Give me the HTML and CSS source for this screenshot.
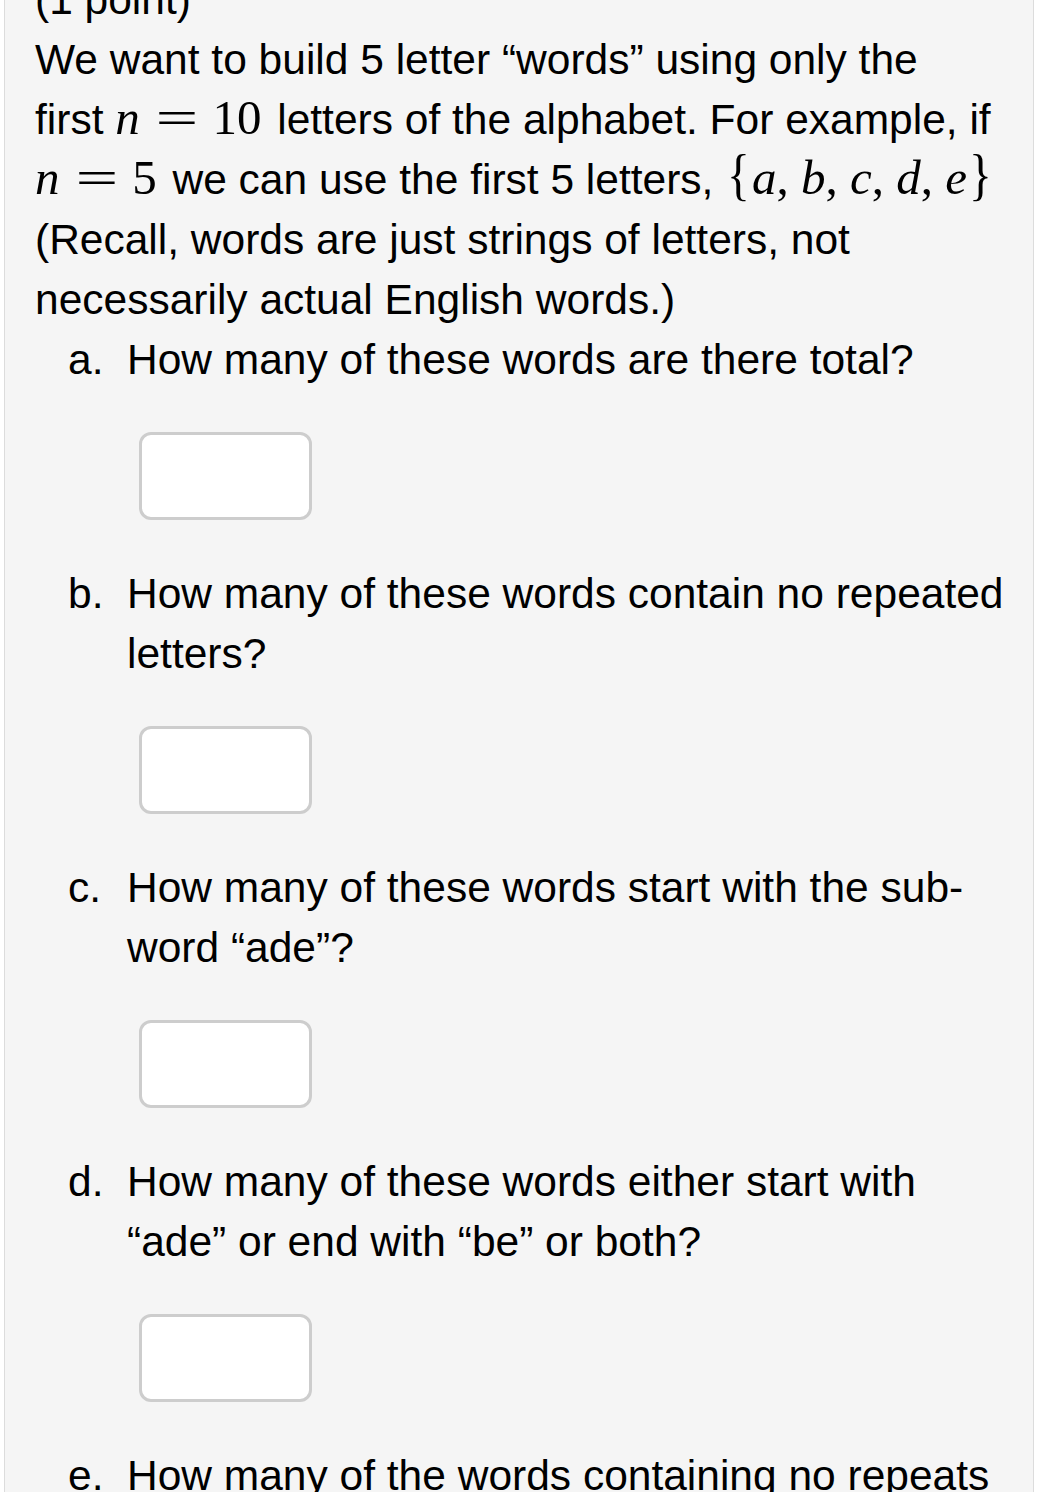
FILE: index.html
```html
<!DOCTYPE html>
<html>
<head>
<meta charset="utf-8">
<link rel="stylesheet" href="styles.css">
</head>
<body>
<div class="panel">
  <p class="line">(1 point)</p>
  <p class="intro">We want to build 5 letter “words” using only the<br>first <span class="m"><i>n</i><span class="op">=</span>10</span> letters of the alphabet. For example, if<br><span class="m"><i>n</i><span class="op">=</span>5</span> we can use the first 5 letters, <span class="m"><span class="br">{</span><i>a</i>, <i>b</i>, <i>c</i>, <i>d</i>, <i>e</i><span class="br">}</span></span><br>(Recall, words are just strings of letters, not<br>necessarily actual English words.)</p>
  <ol class="parts">
    <li class="part">
      <span class="mark">a.</span>
      <div class="body">
        <div class="q">How many of these words are there total?</div>
        <div class="answer"></div>
      </div>
    </li>
    <li class="part">
      <span class="mark">b.</span>
      <div class="body">
        <div class="q">How many of these words contain no repeated<br>letters?</div>
        <div class="answer"></div>
      </div>
    </li>
    <li class="part">
      <span class="mark">c.</span>
      <div class="body">
        <div class="q">How many of these words start with the sub-<br>word “ade”?</div>
        <div class="answer"></div>
      </div>
    </li>
    <li class="part">
      <span class="mark">d.</span>
      <div class="body">
        <div class="q">How many of these words either start with<br>“ade” or end with “be” or both?</div>
        <div class="answer"></div>
      </div>
    </li>
    <li class="part">
      <span class="mark">e.</span>
      <div class="body">
        <div class="q">How many of the words containing no repeats</div>
      </div>
    </li>
  </ol>
</div>
</body>
</html>
```
FILE: styles.css
```css
html, body {
  margin: 0;
  padding: 0;
  background: #ffffff;
}
body {
  font-family: "Liberation Sans", Arial, sans-serif;
  color: #000;
  overflow: hidden;
  height: 1492px;
}
.panel {
  margin: -30px 0 0 4px;
  width: 1030px;
  box-sizing: border-box;
  background: #f5f5f5;
  border-left: 1px solid #dcdcdc;
  border-right: 1px solid #dcdcdc;
  padding: 0 0 200px 30px;
  font-size: 42.5px;
  line-height: 60px;
  min-height: 1700px;
}
.line, .intro {
  margin: 0;
  white-space: nowrap;
}
.m {
  font-family: "Liberation Serif", "DejaVu Serif", serif;
  font-size: 49px;
  line-height: 0;
  margin-right: 4px;
}
.m i {
  font-style: italic;
}
.op {
  display: inline-block;
  margin: 0 22px 0 23px;
  transform: scaleX(1.55);
}
.br {
  font-size: 56px;
  display: inline-block;
  transform: scaleX(0.85);
}
.parts {
  list-style: none;
  margin: 0;
  padding: 0 0 0 33px;
}
.part {
  display: grid;
  grid-template-columns: 59px 1fr;
}
.mark {
  display: block;
}
.q {
  white-space: nowrap;
}
.answer {
  width: 167px;
  height: 82px;
  border: 3px solid #cdcdcd;
  border-radius: 12px;
  background: #fff;
  margin: 42px 0 44px 12px;
}
```
